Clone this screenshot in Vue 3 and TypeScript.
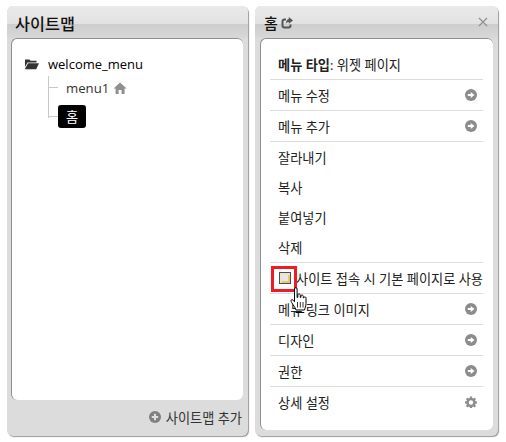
<script setup lang="ts">
interface Row { label: string; icon?: 'arrow' | 'gear'; line?: boolean }
const topRows: Row[] = [
  { label: '메뉴 수정', icon: 'arrow', line: true },
  { label: '메뉴 추가', icon: 'arrow', line: true },
  { label: '잘라내기' },
  { label: '복사' },
  { label: '붙여넣기' },
  { label: '삭제', line: true },
]
const bottomRows: Row[] = [
  { label: '메뉴 링크 이미지', icon: 'arrow', line: true },
  { label: '디자인', icon: 'arrow', line: true },
  { label: '권한', icon: 'arrow', line: true },
  { label: '상세 설정', icon: 'gear' },
]
</script>

<template>
  <div class="page">
    <section class="panel panel-left">
      <header class="head"><h2 class="title">사이트맵</h2></header>
      <div class="card tree-card">
        <div class="root">
          <svg class="folder" viewBox="0 0 15 11" width="15" height="11">
            <path d="M1 0.500h4.500l1 1.300H12.500V3.500H3.500L1 8z" fill="#333" />
            <path d="M4 4.300H15l-2.800 6H0.800z" fill="#333" />
          </svg>
          <span>welcome_menu</span>
        </div>
        <div class="branch">
          <div class="leaf">
            <span>menu1</span>
            <svg viewBox="0 0 14 12" width="14" height="12">
              <path d="M7 0.500 0.600 6.600h2V12h3V8h3v4h3V6.600h2z" fill="#8f8f8f" />
            </svg>
          </div>
          <div class="leaf selected-leaf"><span class="selected">홈</span></div>
        </div>
      </div>
      <footer class="foot">
        <svg viewBox="0 0 12 12" width="12" height="12">
          <circle cx="6" cy="6" r="6" fill="#808080" />
          <path d="M5 2.800h2V5h2.200v2H7v2.200H5V7H2.800V5H5z" fill="#e0e0e0" />
        </svg>
        <span>사이트맵 추가</span>
      </footer>
    </section>

    <section class="panel panel-right">
      <header class="head head-right">
        <h3 class="subtitle">홈</h3>
        <svg class="share" viewBox="0 0 12 12" width="12" height="12">
          <path d="M9.500 7.500V8.500Q9.500 10.500 7.500 10.500H3.500Q1.500 10.500 1.500 8.500V4.500Q1.500 2.500 3.500 2.500H5" fill="none" stroke="#555" stroke-width="2" />
          <path d="M7.800 0 12 3.400 7.800 6.800V5C6.200 5 5.300 5.700 4.800 7.200 4.800 4.500 5.800 2.200 7.800 1.900z" fill="#555" />
        </svg>
        <svg class="close" viewBox="0 0 10 10" width="10" height="10">
          <path d="M1 1l8 8M9 1l-8 8" stroke="#8f8f8f" stroke-width="1.200" />
        </svg>
      </header>
      <div class="card menu-card">
        <div class="row line"><span><b>메뉴 타입</b>: 위젯 페이지</span></div>
        <div v-for="r in topRows" :key="r.label" class="row" :class="{ line: r.line }">
          <span>{{ r.label }}</span>
          <svg v-if="r.icon === 'arrow'" class="go" viewBox="0 0 12 12" width="12" height="12">
            <circle cx="6" cy="6" r="6" fill="#8c8c8c" />
            <path d="M2.800 5h2.900V2.900L9.500 6l-3.800 3.100V7H2.800z" fill="#fff" />
          </svg>
        </div>
        <div class="row line check-row">
          <span class="box"></span>
          <span class="check-label">사이트 접속 시 기본 페이지로 사용</span>
          <span class="mark"></span>
          <svg class="hand" viewBox="0 0 18 27" width="18" height="27">
            <path d="M4.500 2c0-1.800 2.600-1.800 2.600 0v8.500l.7-.1V8c0-1.500 2.400-1.500 2.500.2v2.300l.6-.1V9c0-1.400 2.300-1.400 2.400.3v1.600l.5-.1c.2-1.300 2.200-1.300 2.200.4v5.300c0 2.700-1 4.300-1.500 6.500H6c-.6-2.500-2.600-4.500-4.300-7.400-1.300-2.300-.3-3.600 1.100-2.600l1.700 1.700z" fill="#fff" stroke="#000" stroke-width="1" />
            <path d="M7.500 15v5.500M10.300 15v5.500M13 15v5.500" stroke="#000" stroke-width=".8" />
            <path d="M5.500 25.500h8.800" stroke="#000" stroke-width="1" />
          </svg>
        </div>
        <div v-for="r in bottomRows" :key="r.label" class="row" :class="{ line: r.line }">
          <span>{{ r.label }}</span>
          <svg v-if="r.icon === 'arrow'" class="go" viewBox="0 0 12 12" width="12" height="12">
            <circle cx="6" cy="6" r="6" fill="#8c8c8c" />
            <path d="M2.800 5h2.900V2.900L9.500 6l-3.800 3.100V7H2.800z" fill="#fff" />
          </svg>
          <svg v-else-if="r.icon === 'gear'" class="go" viewBox="0 0 12 12" width="12" height="12">
            <path d="M5 .500h2l.3 1.600 1 .4L9.700 1.700 11 3 10 4.300l.5 1L12 5.500v2l-1.500.3-.5 1 1 1.300-1.300 1.300-1.400-.9-1 .4-.3 1.500H5l-.3-1.500-1-.4-1.400.9L1 10.100l.9-1.300-.4-1L0 7.500v-2l1.500-.2.400-1L1 3l1.300-1.300 1.400.8 1-.4z" fill="#8c8c8c" />
            <circle cx="6" cy="6.500" r="2.200" fill="#fff" />
          </svg>
        </div>
      </div>
    </section>
  </div>
</template>

<style>
html, body { margin: 0; background: #fff; }
</style>

<style scoped>
.page {
  width: 506px;
  height: 442px;
  box-sizing: border-box;
  padding: 6px 8px 6px 7px;
  display: grid;
  grid-template-columns: 241px 243px;
  column-gap: 7px;
  font-family: "Open Sans", "Noto Sans CJK KR", sans-serif;
  font-size: 13.2px;
  color: #222;
  overflow: hidden;
}
.panel {
  display: flex;
  flex-direction: column;
  background: #dcdcdc;
  border-radius: 6px;
  box-shadow: 1px 1px 1px #999;
  height: 430px;
  box-sizing: border-box;
}
.panel-left { padding: 0 5px 0 4px; }
.panel-right { padding: 0 5px; }
.head {
  height: 32px;
  padding: 1px 0 0 4px;
  display: flex;
  align-items: center;
  box-sizing: border-box;
  flex: none;
  border-radius: 6px 6px 0 0;
  background: linear-gradient(#eaeaea 0, #e2e2e2 55%, #cdcdcd 56%, #d8d8d8 100%);
}
.panel-left .head { margin: 0 -5px 0 -4px; padding-left: 8px; }
.panel-right .head { margin: 0 -5px; padding-left: 9px; }
.title { margin: 0; font-size: 16.300px; font-weight: 500; color: #111; }
.head-right { gap: 3px; }
.subtitle { margin: 0; font-size: 15px; font-weight: 500; color: #111; }
.share { margin-top: 1px; }
.close { margin-left: auto; margin-right: 10px; margin-top: -2px; }
.card {
  background: #fff;
  border-radius: 6px;
  border: 1px solid #8f8f8f;
  border-width: 1px 0 0 1px;
  box-sizing: border-box;
}
.tree-card {
  height: 362px;
  padding: 17px 0 0 12px;
}
.root {
  display: flex;
  align-items: center;
  gap: 9px;
  height: 16px;
  font-size: 13px;
  color: #000;
}
.branch {
  margin: 4px 0 0 24px;
  position: relative;
  width: 120px;
}
.branch::before {
  content: "";
  position: absolute;
  left: 0;
  top: 0;
  height: 42px;
  width: 1px;
  background: #c8c8c8;
}
.leaf {
  display: flex;
  align-items: center;
  gap: 4px;
  height: 24px;
  padding-left: 18px;
  position: relative;
  color: #333;
}
.leaf::before {
  content: "";
  position: absolute;
  left: 0;
  top: 11px;
  width: 10px;
  height: 1px;
  background: #c8c8c8;
}
.selected-leaf { padding-left: 10px; height: 23px; margin-top: 5px; }
.selected {
  background: #000;
  color: #fff;
  width: 28px;
  height: 23px;
  border-radius: 3px;
  display: flex;
  align-items: center;
  justify-content: center;
}
.foot {
  flex: 1;
  display: flex;
  align-items: center;
  justify-content: flex-end;
  gap: 5px;
  padding-right: 1px;
  padding-bottom: 2px;
  color: #333;
}
.menu-card {
  height: 392px;
  padding: 10px 10px 0 9px;
}
.row {
  height: 30px;
  box-sizing: border-box;
  padding: 0 6px 0 8px;
  display: flex;
  align-items: center;
  justify-content: space-between;
  position: relative;
  color: #222;
}
.row b { font-weight: 600; }
.line { height: 31px; border-bottom: 1px solid #dcdcdc; }
.check-row { justify-content: flex-start; padding: 0 0 0 9px; gap: 5px; }
.box {
  width: 12px;
  height: 12px;
  box-sizing: border-box;
  border: 1px solid #2f5578;
  background: #e6e6e6;
  box-shadow: inset 2px 2px 0 #f8e2b4, inset -2px -2px 0 #f6c25f;
  flex: none;
}
.check-label { white-space: nowrap; }
.mark {
  position: absolute;
  left: 1px;
  top: 3px;
  width: 26px;
  height: 26px;
  box-sizing: border-box;
  border: 3px solid #ee1c25;
}
.hand {
  position: absolute;
  left: 20px;
  top: 24px;
  z-index: 2;
}
</style>
